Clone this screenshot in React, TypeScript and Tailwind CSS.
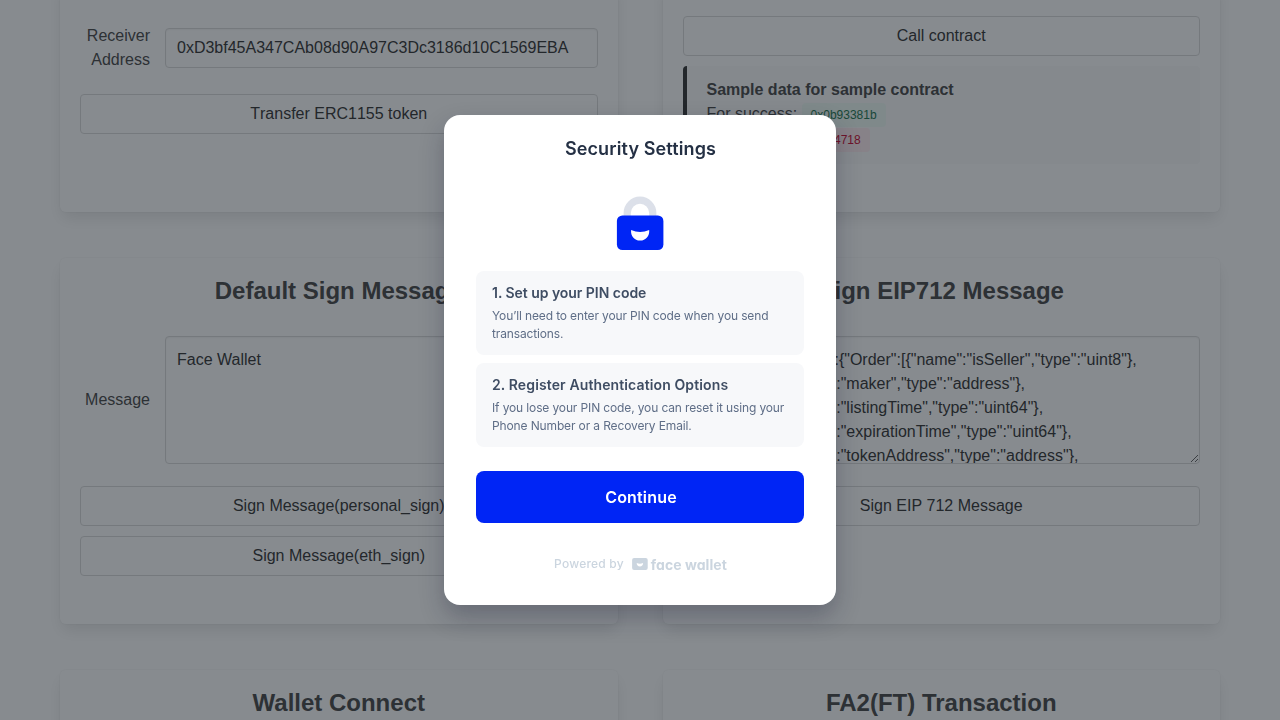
import type { ReactNode } from 'react';

function Card({ title, children }: { title?: string; children?: ReactNode }) {
  return (
    <section className="flex flex-col rounded-md bg-white p-5 shadow-[0_8px_16px_-2px_rgba(10,10,10,0.1),0_0_0_1px_rgba(10,10,10,0.02)]">
      {title && (
        <h2 className="-mt-px mb-8 text-center text-2xl leading-[27px] font-bold text-[#4a4a4a]">{title}</h2>
      )}
      {children}
    </section>
  );
}

function OutlineButton({ children }: { children: ReactNode }) {
  return (
    <button className="mb-2.5 h-10 w-full shrink-0 rounded border border-[#dbdbdb] bg-white text-center leading-6 text-[#363636] [font-kerning:none]">
      {children}
    </button>
  );
}

function Field({ label, children }: { label?: string; children: ReactNode }) {
  return (
    <div className="mb-[22px] flex items-center">
      <label className="mr-[15px] w-[70px] shrink-0 text-right leading-6">{label}</label>
      <div className="flex min-w-0 flex-1">{children}</div>
    </div>
  );
}

function MessageArea({ value }: { value: string }) {
  return (
    <textarea
      className="block h-32 w-full resize-y overflow-hidden rounded border border-[#dbdbdb] bg-white p-[11px] leading-6 text-[#363636] shadow-[inset_0_1px_2px_rgba(10,10,10,0.05)]"
      defaultValue={value}
    />
  );
}

const typedData = [
  '{"types":{"Order":[{"name":"isSeller","type":"uint8"},',
  '{"name":"maker","type":"address"},',
  '{"name":"listingTime","type":"uint64"},',
  '{"name":"expirationTime","type":"uint64"},',
  '{"name":"tokenAddress","type":"address"},',
  '{"name":"tokenId","type":"uint256"}]}}',
].join('\n');

function LockIcon() {
  return (
    <svg className="block" width="48" height="54" viewBox="0 0 48 54" fill="none">
      <path d="M7.6 24V17a16.4 16.4 0 0 1 32.8 0V24H33.2V17a9.2 9.2 0 0 0-18.4 0V24Z" fill="#dce0e9" />
      <rect x="0.9" y="19.4" width="46.5" height="34.6" rx="5.5" fill="#0025f5" />
      <path d="M15.1 33.9Q24 38.2 33.2 33.9C33.7 40 29.8 44.5 24.1 44.5S14.5 40 15.1 33.9Z" fill="#fff" />
    </svg>
  );
}

function FaceMark() {
  return (
    <svg className="block" width="16" height="12" viewBox="0 0 16 12" fill="none">
      <rect x="0.1" y="0" width="15.6" height="12" rx="2" fill="#cbd5df" />
      <path d="M4.7 5Q7.9 6.6 11.1 5C11.1 7.2 9.8 8.6 7.9 8.6S4.7 7.2 4.7 5Z" fill="#fff" />
    </svg>
  );
}

function Step({ title, children }: { title: ReactNode; children: ReactNode }) {
  return (
    <li className="h-[84px] rounded-lg bg-[#f7f8fa] px-4 py-3">
      <h3 className="text-sm leading-5 font-semibold text-[#3f4d63]">{title}</h3>
      <p className="mt-1 text-xs leading-[18px] whitespace-nowrap text-[#5f6e87]">{children}</p>
    </li>
  );
}

function SecurityDialog() {
  return (
    <div
      role="dialog"
      className="flex h-[490px] w-[392px] flex-col items-center rounded-2xl bg-white px-8 font-['Inter',sans-serif] shadow-[0_12px_24px_rgba(20,26,52,0.28)]"
    >
      <h1 className="mt-5 pl-px text-lg leading-7 font-semibold tracking-[0.12px] text-[#243044]">Security Settings</h1>
      <div className="mt-[33px]">
        <LockIcon />
      </div>
      <ol className="mt-[21px] flex w-full flex-col gap-2">
        <Step title={<span className="tracking-[-0.04px]">1. Set up your PIN code</span>}>
          <span className="tracking-[-0.14px]">
            You’ll need to enter your PIN code when you send
            <br />
            transactions.
          </span>
        </Step>
        <Step title={<span className="tracking-[0.12px]">2. Register Authentication Options</span>}>
          <span className="tracking-[-0.13px]">
            If you lose your PIN code, you can reset it using your
            <br />
            Phone Number or a Recovery Email.
          </span>
        </Step>
      </ol>
      <button className="mt-6 h-[52px] w-full shrink-0 rounded-lg bg-[#0025f5] pl-0.5 text-base font-semibold tracking-[0.18px] text-white">
        Continue
      </button>
      <div className="mt-8 flex h-[18px] items-center pl-px text-[#cbd5df]">
        <span className="text-xs leading-[18px] font-medium tracking-[0.2px]">Powered by</span>
        <span className="ml-2 flex items-center">
          <FaceMark />
          <span className="mt-px ml-[3px] text-sm leading-[18px] font-bold tracking-[0.05px] whitespace-nowrap [font-feature-settings:'cv11']">
            face wallet
          </span>
        </span>
      </div>
    </div>
  );
}

export default function App() {
  return (
    <div className="h-[720px] w-[1280px] overflow-hidden bg-white font-['Liberation_Sans',Arial,sans-serif] text-base text-[#4a4a4a]">
      <main className="-mt-5 grid grid-cols-2 grid-rows-[232px_366px_200px] gap-x-[45px] gap-y-[46px] px-[60px]">
        <Card>
          <div className="mt-6">
            <Field label="Receiver Address">
              <input
                className="h-10 w-full rounded border border-[#dbdbdb] bg-white px-[11px] leading-6 text-[#363636] shadow-[inset_0_1px_2px_rgba(10,10,10,0.05)]"
                defaultValue="0xD3bf45A347CAb08d90A97C3Dc3186d10C1569EBA"
              />
            </Field>
            <OutlineButton>Transfer ERC1155 token</OutlineButton>
          </div>
        </Card>
        <Card>
          <div className="mt-4">
            <OutlineButton>Call contract</OutlineButton>
            <div className="h-[98px] rounded border-l-4 border-[#363636] bg-[#fafafa] px-5 py-3">
              <p className="leading-6 font-bold">Sample data for sample contract</p>
              <p className="flex h-[25px] items-start leading-6">
                For success:
                <span className="mt-px ml-[4.4px] rounded bg-[#effaf5] px-[9px] text-xs leading-6 text-[#257953]">
                  0x0b93381b
                </span>
              </p>
              <p className="flex h-[25px] items-start leading-6">
                For failure:
                <span className="mt-px ml-[6px] rounded bg-[#feecf0] px-[9px] text-xs leading-6 text-[#cc0f35]">
                  0x3df94718
                </span>
              </p>
            </div>
          </div>
        </Card>
        <Card title="Default Sign Message">
          <Field label="Message">
            <MessageArea value="Face Wallet" />
          </Field>
          <OutlineButton>Sign Message(personal_sign)</OutlineButton>
          <OutlineButton>Sign Message(eth_sign)</OutlineButton>
        </Card>
        <Card title="Sign EIP712 Message">
          <Field>
            <MessageArea value={typedData} />
          </Field>
          <OutlineButton>Sign EIP 712 Message</OutlineButton>
        </Card>
        <Card title="Wallet Connect" />
        <Card title="FA2(FT) Transaction" />
      </main>
      <div className="fixed inset-0 flex items-center justify-center bg-[rgba(16,24,32,0.5)]">
        <SecurityDialog />
      </div>
    </div>
  );
}
